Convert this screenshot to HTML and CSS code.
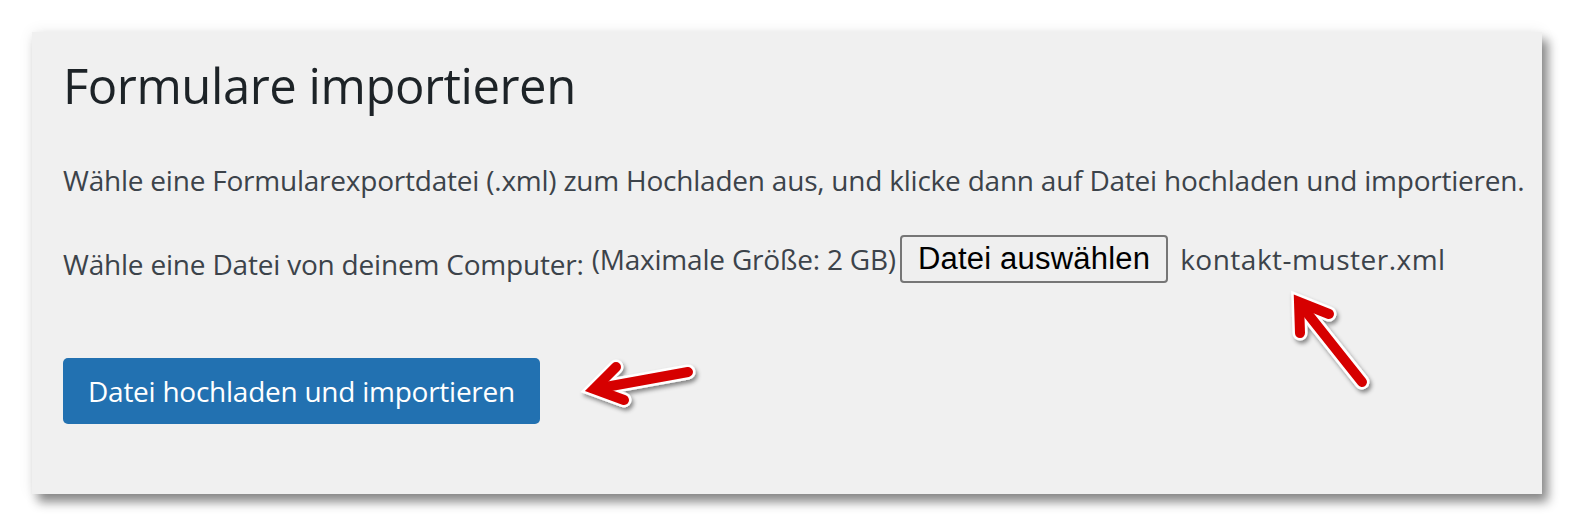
FILE: index.html
```html
<!DOCTYPE html>
<html lang="de">
<head>
<meta charset="utf-8">
<title>Formulare importieren</title>
<link rel="stylesheet" href="styles.css">
</head>
<body>
<div class="panel">
  <h1 class="title">Formulare importieren</h1>
  <p class="intro">Wähle eine Formularexportdatei (.xml) zum Hochladen aus, und klicke dann auf Datei hochladen und importieren.</p>
  <div class="file-row">
    <label class="file-label">Wähle eine Datei von deinem Computer:</label>
    <span class="max-size">(Maximale Größe: 2 GB)</span>
    <span class="file-btn">Datei auswählen</span>
    <span class="file-name">kontakt-muster.xml</span>
  </div>
  <div class="submit-row">
    <button class="primary-btn" type="button">Datei hochladen und importieren</button>
  </div>
  <svg class="arrows" width="1574" height="527" viewBox="0 0 1574 527">
    <defs>
      <filter id="sh" x="-20%" y="-20%" width="140%" height="140%">
        <feDropShadow dx="2" dy="3" stdDeviation="2" flood-color="#000" flood-opacity="0.45"/>
      </filter>
    </defs>
    <g filter="url(#sh)" fill="none" stroke-linecap="round" stroke-linejoin="miter">
      <g stroke="#fff" stroke-width="15">
        <path d="M688 372 L600 388"/>
        <path d="M616 367 L594 389 L624 400"/>
        <path d="M1362 382 L1304 309"/>
        <path d="M1300 333 L1299 302 L1329 314"/>
      </g>
      <g stroke="#d60000" stroke-width="10">
        <path d="M688 372 L600 388"/>
        <path d="M616 367 L594 389 L624 400"/>
        <path d="M1362 382 L1304 309"/>
        <path d="M1300 333 L1299 302 L1329 314"/>
      </g>
    </g>
  </svg>
</div>
</body>
</html>
```

FILE: styles.css
```css
html, body {
  margin: 0;
  padding: 0;
  background: #fff;
}
body {
  width: 1574px;
  height: 527px;
  overflow: hidden;
  font-family: "Open Sans", "Noto Sans", sans-serif;
}
.panel {
  position: relative;
  margin: 32px 0 0 32px;
  width: 1510px;
  height: 462px;
  box-sizing: border-box;
  background: #f0f0f0;
  padding: 27px 0 0 31px;
  box-shadow: 6px 8px 10px rgba(0,0,0,0.45), 0 0 14px rgba(0,0,0,0.08);
  display: flex;
  flex-direction: column;
  align-items: flex-start;
}
.title {
  margin: 0;
  font-weight: 400;
  font-size: 49px;
  letter-spacing: -0.45px;
  line-height: 52px;
  color: #1d2327;
}
.intro {
  margin: 55px 0 0 0;
  font-size: 28px;
  letter-spacing: -0.22px;
  line-height: 29px;
  color: #3c434a;
  white-space: nowrap;
}
.file-row {
  margin-top: 40px;
  display: flex;
  align-items: center;
  color: #3c434a;
  font-size: 28px;
  letter-spacing: -0.2px;
  white-space: nowrap;
}
.file-label {
  position: relative;
  top: 5px;
  margin-right: 8px;
}
.file-btn {
  font-family: "Liberation Sans", Arial, sans-serif;
  color: #000;
  font-size: 31px;
  letter-spacing: 0.2px;
  height: 48px;
  box-sizing: border-box;
  padding: 0 16px;
  display: flex;
  align-items: center;
  border: 2px solid #767676;
  border-radius: 4px;
  background: #efefef;
  margin: 0 12px 0 4px;
}
.file-name {
  letter-spacing: 0.5px;
}
.submit-row {
  margin-top: 75px;
}
.primary-btn {
  font-family: "Open Sans", "Noto Sans", sans-serif;
  font-size: 28px;
  letter-spacing: -0.25px;
  color: #fff;
  background: #2271b1;
  border: none;
  border-radius: 5px;
  height: 66px;
  padding: 0 25px;
  margin: 0;
  cursor: pointer;
}
.arrows {
  position: absolute;
  left: -32px;
  top: -32px;
  pointer-events: none;
  overflow: visible;
}
```
